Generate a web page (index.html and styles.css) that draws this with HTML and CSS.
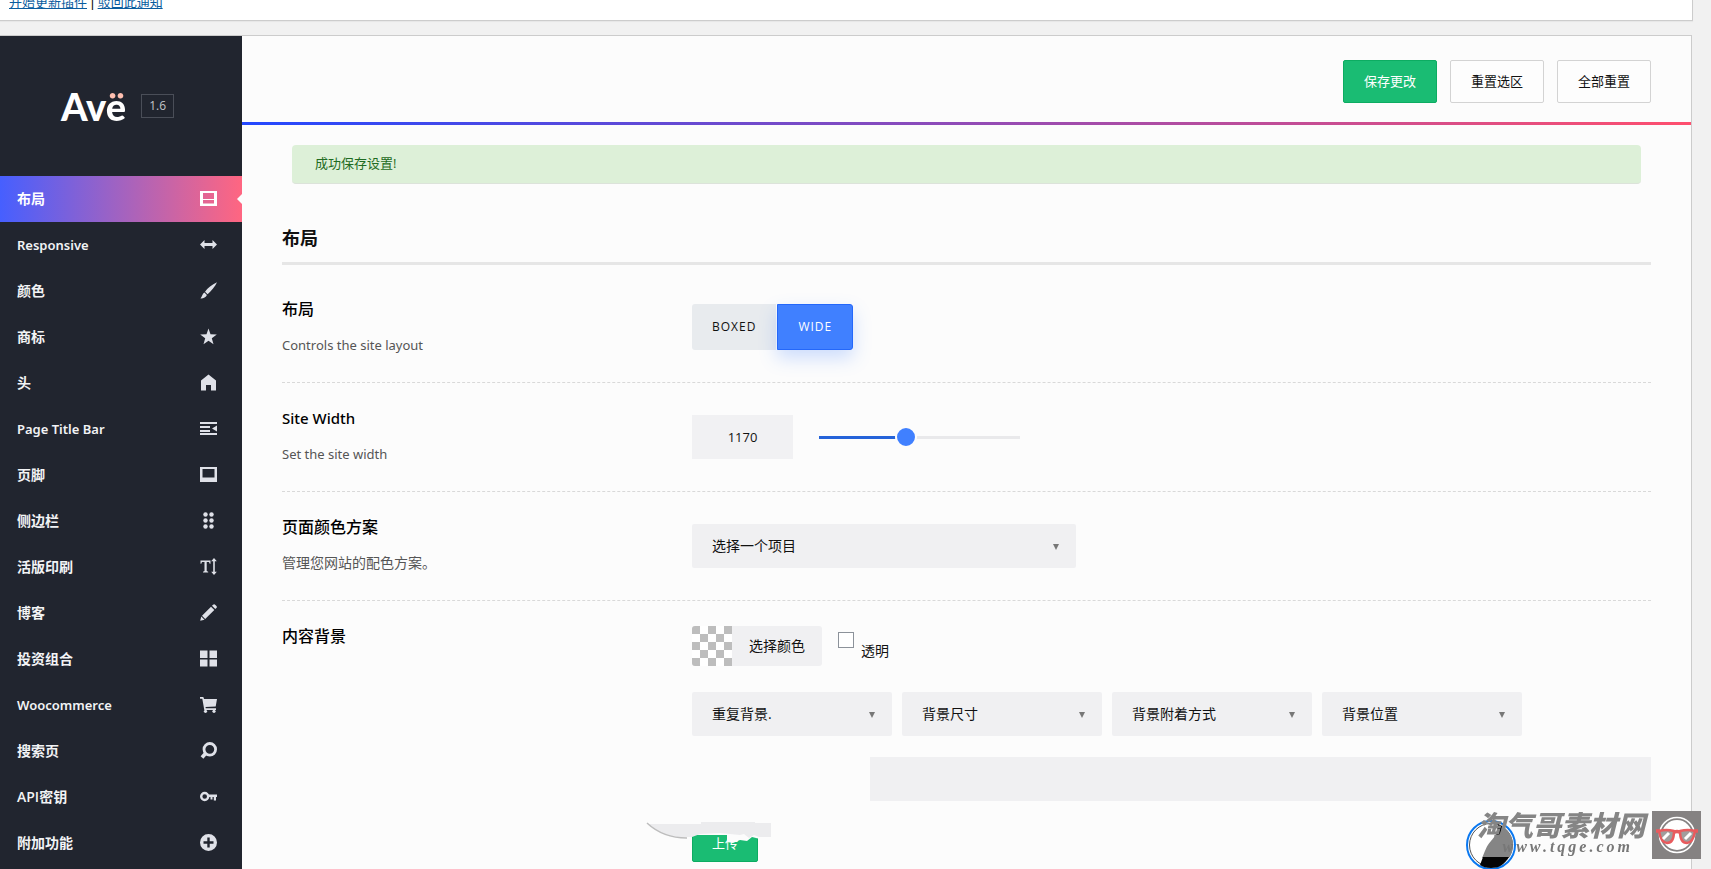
FILE: index.html
```html
<!DOCTYPE html>
<html lang="zh-CN">
<head>
<meta charset="utf-8">
<title>Avë 主题选项</title>
<link rel="stylesheet" href="styles.css">
</head>
<body>
<div class="notice"><a href="#">开始更新插件</a> | <a href="#">驳回此通知</a></div>
<div class="panel">
  <aside class="sidebar">
    <div class="brand">
      <span class="logo">Av<span class="logo-accent">ë</span></span>
      <span class="version">1.6</span>
    </div>
    <nav class="menu">
      <a class="item active" href="#"><span>布局</span><svg viewBox="0 0 17 17"><path fill-rule="evenodd" d="M0 1h17v15H0zM3 3v6h11V3zM3 10v3.500h11V10z"/></svg></a>
      <a class="item latin" href="#"><span>Responsive</span><svg viewBox="0 0 17 17"><path d="M0 8.500 4.500 4v3h8V4L17 8.500 12.500 13v-3h-8v3z"/></svg></a>
      <a class="item" href="#"><span>颜色</span><svg viewBox="0 0 17 17"><path d="M17 .3C12 2.500 7.500 6 5 9.800l2.600 2.500C11.500 9 15 4.500 17 .3zM4.400 10.600C2.500 11.500 2.300 14.500.5 16.500c2.500.2 5.500-.8 6.400-3.400z"/></svg></a>
      <a class="item" href="#"><span>商标</span><svg viewBox="0 0 17 17"><path d="m8.500 .5 2 5.700 6.300.2-5 3.800 1.700 6-5-3.400-5 3.400 1.700-6-5-3.800 6.300-.2z"/></svg></a>
      <a class="item" href="#"><span>头</span><svg viewBox="0 0 17 17"><path d="M8.500.5 16 6.500v10h-5V11H6v5.500H1v-10z"/></svg></a>
      <a class="item latin" href="#"><span>Page Title Bar</span><svg viewBox="0 0 17 17"><path d="M0 2h17v2H0zM0 6h10v2H0zM0 10h10v2H0zM0 13h17v2H0zM17 5.500v6L12 8.500z"/></svg></a>
      <a class="item" href="#"><span>页脚</span><svg viewBox="0 0 17 17"><path fill-rule="evenodd" d="M0 1h17v15H0zM2.500 3v8.500h12V3z"/></svg></a>
      <a class="item" href="#"><span>侧边栏</span><svg viewBox="0 0 17 17"><circle cx="5.500" cy="2.500" r="2.200"/><circle cx="11.500" cy="2.500" r="2.200"/><circle cx="5.500" cy="8.500" r="2.200"/><circle cx="11.500" cy="8.500" r="2.200"/><circle cx="5.500" cy="14.500" r="2.200"/><circle cx="11.500" cy="14.500" r="2.200"/></svg></a>
      <a class="item" href="#"><span>活版印刷</span><svg viewBox="0 0 17 17"><path d="M.5 2.500h10v3.200H9.700L9 4H6.700v9l1.500.7v.8H3v-.8l1.500-.7V4H2l-.7 1.700H.5zM14 0l2.800 3.200h-2v10.600h2L14 17l-2.800-3.200h2V3.200h-2z"/></svg></a>
      <a class="item" href="#"><span>博客</span><svg viewBox="0 0 17 17"><path d="M11 2.800 14.300 6 5.200 15 2 11.800zM12 1.800 13 .8q1.200-1 2.400.1l1 1q1 1.200 0 2.200L15.300 5zM1.300 12.600l3.200 3.100-4.300 1z"/></svg></a>
      <a class="item" href="#"><span>投资组合</span><svg viewBox="0 0 17 17"><path d="M0 .5h7.500V8H0zM9.500.5H17V8H9.500zM0 9.500h7.500v7H0zM9.500 9.500H17v7H9.500z"/></svg></a>
      <a class="item latin" href="#"><span>Woocommerce</span><svg viewBox="0 0 17 17"><path d="M0 1h3.300l.8 2H17l-1.300 7.500L5.500 11l.3 1.300H16V14H4.300L2.300 2.700H0z"/><circle cx="5.500" cy="15.300" r="1.600"/><circle cx="14" cy="15.300" r="1.600"/></svg></a>
      <a class="item" href="#"><span>搜索页</span><svg viewBox="0 0 17 17"><path class="line" d="M5.500 11.500 2 15.500" stroke-width="3.600"/><circle class="line" cx="9.800" cy="7.300" r="5.800" stroke-width="2.800"/></svg></a>
      <a class="item" href="#"><span>API密钥</span><svg viewBox="0 0 17 17"><circle class="line" cx="4.700" cy="8.500" r="3.500" stroke-width="2.400"/><path d="M8.300 6.500H17V9h-1v3.500h-2.200V9h-1.300v2.500h-2V9H8.300z"/></svg></a>
      <a class="item" href="#"><span>附加功能</span><svg viewBox="0 0 17 17"><path fill-rule="evenodd" d="M8.500 0a8.500 8.500 0 1 1 0 17 8.500 8.500 0 0 1 0-17zM7.300 3.500v3.800H3.500v2.400h3.800v3.800h2.400V9.700h3.800V7.300H9.700V3.500z"/></svg></a>
    </nav>
  </aside>
  <main class="main">
    <header class="topbar">
      <button class="btn primary" type="button">保存更改</button>
      <button class="btn" type="button">重置选区</button>
      <button class="btn" type="button">全部重置</button>
    </header>
    <div class="saved" role="status">成功保存设置!</div>
    <div class="content">
      <h2 class="section-title">布局</h2>
      <section class="row">
        <div class="info"><h3>布局</h3><p class="latin">Controls the site layout</p></div>
        <div class="control toggle">
          <button type="button">BOXED</button><button type="button" class="on" aria-pressed="true">WIDE</button>
        </div>
      </section>
      <section class="row">
        <div class="info"><h3 class="latin"><label for="width">Site Width</label></h3><p class="latin">Set the site width</p></div>
        <div class="control width-control">
          <input class="number" id="width" type="text" value="1170">
          <input class="slider" type="range" min="320" max="2320" value="1170" aria-label="Site Width">
        </div>
      </section>
      <section class="row">
        <div class="info"><h3><label for="scheme">页面颜色方案</label></h3><p>管理您网站的配色方案。</p></div>
        <div class="control">
          <div class="select wide"><select id="scheme"><option>选择一个项目</option></select></div>
        </div>
      </section>
      <section class="row backgrounds">
        <div class="info"><h3>内容背景</h3></div>
        <div class="control">
          <div class="color-line">
            <button class="picker" type="button"><span class="checker"></span><span class="picker-text">选择颜色</span></button>
            <input class="check" id="transparent" type="checkbox"><label class="check-label" for="transparent">透明</label>
          </div>
          <div class="selects">
            <div class="select"><select aria-label="重复背景"><option>重复背景.</option></select></div>
            <div class="select"><select aria-label="背景尺寸"><option>背景尺寸</option></select></div>
            <div class="select"><select aria-label="背景附着方式"><option>背景附着方式</option></select></div>
            <div class="select"><select aria-label="背景位置"><option>背景位置</option></select></div>
          </div>
          <div class="url-line"><input class="url" type="text" aria-label="背景图片"></div>
          <div class="upload-line">
            <button class="btn primary upload" type="button">上传</button>
            <svg class="smear" viewBox="0 0 130 28" aria-hidden="true">
              <path fill="#fcfcfc" d="M42 0h72v22l-8-2-5 4-7-1-7 3-6-1V18H42z"/>
              <path fill="#ececee" d="M3 7h52V5h54v1h16v14h-12l-5-2-5 3-5-4-4 1-20-2-20 1-8 3H34Q18 21 3 7z"/>
              <path fill="none" stroke="#bdbdbd" stroke-width="1.500" d="M1 6q16 15 40 15"/>
            </svg>
          </div>
        </div>
      </section>
    </div>
  </main>
</div>
<div class="badge">
  <svg class="emblem" viewBox="0 0 50 50" aria-hidden="true">
    <circle cx="25" cy="25" r="24" fill="#fff" stroke="#0a78f0" stroke-width="2"/>
    <circle cx="25" cy="25" r="21.500" fill="none" stroke="#555"/>
    <path fill="#858585" d="M33 5c7 2 13 9 14 18 0 6-1 11-4 15H16c3-6 4-12 9-17 4-4 6-9 8-16z"/>
    <path fill="#050505" d="m32 4 4 2-1 9-5 3zM17 37h26c-5 8-10 11-18 11-5 0-8-1-11-3z"/>
  </svg>
  <div class="mark"><div class="mark-name">淘气哥素材网</div><div class="mark-url">www.tqge.com</div></div>
  <svg class="face" viewBox="0 0 49 48" aria-hidden="true">
    <path fill="#858282" d="M0 0h49v48H0z"/>
    <circle cx="25" cy="24" r="17.500" fill="none" stroke="#fff" stroke-width="1.500"/>
    <circle cx="25" cy="24" r="15" fill="#fff"/>
    <path fill="#a09d9d" stroke="#e85b5e" stroke-width="2.500" stroke-linejoin="round" d="M7 20q7-2 15 0 0 12-7 12-6 0-8-12zM28 20q8-2 15 0-2 12-8 12-7 0-7-12z"/>
    <path fill="none" stroke="#e85b5e" stroke-width="3.500" d="M4 20h4M42 20h4M22 21q3-1 6 0"/>
    <path stroke="#fff" stroke-width="3" d="m11 28 6-6M33 28l6-6"/>
  </svg>
</div>
</body>
</html>
```
FILE: styles.css
```css
* { box-sizing: border-box; }

body {
  margin: 0;
  display: flex;
  flex-direction: column;
  gap: 14px;
  height: 100vh;
  overflow: hidden;
  background: #f1f1f1;
  color: #111;
  font: 14px/20px "Open Sans", "Noto Sans CJK SC", sans-serif;
}

button, input, select { font: inherit; color: inherit; }
h2, h3, p { margin: 0; }

.notice {
  flex: none;
  height: 21px;
  margin-right: 18px;
  padding-left: 9px;
  background: #fff;
  border: solid #ccc;
  border-width: 0 1px 1px 0;
  box-shadow: 0 1px 1px #0000000a;
  font: 13px/6px "Liberation Sans", "Noto Sans CJK SC", sans-serif;
}
.notice a { color: #0a5c9e; }

.panel {
  flex: 1 0 auto;
  display: flex;
  margin-right: 19px;
  border: solid #ccc;
  border-width: 1px 1px 0 0;
  background: #fcfcfc;
}

.sidebar {
  flex: none;
  width: 242px;
  background: #21252f;
}
.brand {
  display: flex;
  align-items: center;
  gap: 15px;
  height: 140px;
  padding-left: 61px;
}
.logo {
  color: #fff;
  font: 900 38px/44px Lato, sans-serif;
}
.logo-accent {
  background: linear-gradient(#ffbfb0 34%, #fff 34%);
  background-clip: text;
  color: transparent;
}
.version {
  width: 33px;
  height: 24px;
  border: 1px solid #4a4e58;
  color: #c3c5ca;
  font-size: 12px;
  line-height: 22px;
  text-align: center;
}

.item {
  display: flex;
  align-items: center;
  justify-content: space-between;
  height: 46px;
  padding: 0 25px 1px 17px;
  color: #f2f3f5;
  font-weight: 600;
  text-decoration: none;
}
.item svg { width: 17px; height: 17px; fill: #dfe1e8; }
.item .line { fill: none; stroke: #dfe1e8; }
.item.active {
  position: relative;
  background: linear-gradient(90deg, #465fff, #ff6681);
  color: #fff;
}
.item.active svg { fill: #fff; }
.item.active::after {
  content: "";
  position: absolute;
  right: 0;
  top: 18px;
  border: solid transparent;
  border-width: 5px 5px 5px 0;
  border-right-color: #fcfcfc;
}
.latin { font-family: "Noto Sans", sans-serif; font-size: 13px; }

.main { flex: 1; min-width: 0; }

.topbar {
  display: flex;
  justify-content: flex-end;
  gap: 13px;
  padding: 24px 40px 19px;
  border-bottom: 3px solid;
  border-image: linear-gradient(90deg, #2348ff, #ff4f6e) 1;
}
.btn {
  height: 43px;
  min-width: 94px;
  padding: 0 20px 2px;
  border: 1px solid #d3d3d3;
  border-radius: 2px;
  background: #fdfdfd;
  font-size: 13px;
}
.btn.primary { background: #1abc73; border-color: #0dac62; color: #fff; }

.saved {
  margin: 20px 50px 0;
  padding: 8px 23px 10px;
  border-bottom: 1px solid #dce3da;
  border-radius: 4px;
  background: #ddf0d8;
  color: #1f6b22;
  font-size: 13px;
}

.content { padding: 0 40px; }
.section-title {
  margin: 36px 0 9px;
  padding: 6px 0 12px;
  border-bottom: 3px solid #e6e6e6;
  font-size: 18px;
  line-height: 24px;
}

.row {
  display: grid;
  grid-template-columns: 410px minmax(0, 1fr);
  min-height: 109px;
  border-bottom: 1px dashed #d9d9d9;
}
.info { padding-top: 23px; }
.info h3 { font-size: 16px; line-height: 24px; font-weight: 500; color: #000; }
.info h3.latin { font-size: 15px; }
.info p { margin-top: 14px; color: #555; }
.control { padding-top: 32px; }
.backgrounds { border-bottom: 0; }
.backgrounds .control { padding-top: 25px; }

.control.toggle { display: flex; align-items: flex-start; gap: 1px; padding-top: 30px; }
.toggle button {
  height: 46px;
  padding: 0 20px;
  border: 0;
  border-radius: 3px 0 0 3px;
  background: #e8ebee;
  font-size: 12px;
  letter-spacing: 1px;
}
.toggle .on {
  border: 1px solid #2468fa;
  border-radius: 0 3px 3px 0;
  background: #4080ff;
  color: #fff;
  box-shadow: 0 8px 18px #4080ff40;
}

.width-control { display: flex; align-items: flex-start; gap: 26px; }
.number {
  width: 101px;
  height: 44px;
  border: 0;
  background: #f1f1f3;
  font-size: 13px;
  text-align: center;
}
.slider {
  appearance: none;
  width: 201px;
  height: 44px;
  margin: 0;
  background: linear-gradient(90deg, #2563d9 43%, #e9e9eb 43%) center / 100% 3px no-repeat;
}
.slider::-webkit-slider-thumb {
  appearance: none;
  width: 22px;
  height: 22px;
  border: 2px solid #fcfcfc;
  border-radius: 50%;
  background: #4080ff;
}

.select { position: relative; flex: 0 1 200px; }
.select.wide { max-width: 384px; }
.select select {
  appearance: none;
  display: block;
  width: 100%;
  height: 44px;
  padding: 0 32px 0 20px;
  border: 0;
  border-radius: 2px;
  background: #f0f0f2;
}
.select::after {
  content: "";
  position: absolute;
  right: 17px;
  top: 20px;
  border: solid transparent;
  border-width: 6px 3px 0;
  border-top-color: #777;
}

.color-line { display: flex; align-items: flex-start; }
.picker {
  display: flex;
  align-items: center;
  height: 40px;
  padding: 0;
  overflow: hidden;
  border: 0;
  border-radius: 3px;
  background: #f0f0f2;
}
.checker {
  width: 40px;
  height: 40px;
  background: repeating-conic-gradient(#bdbdbd 0 25%, #fff 0 50%) 8px 0 / 16px 16px;
}
.picker-text { padding: 0 17px; }
.check {
  appearance: none;
  width: 16px;
  height: 16px;
  margin: 6px 7px 0 16px;
  border: 1px solid #8c929a;
  background: #fff;
}
.check-label { padding-top: 15px; }

.selects { display: flex; gap: 10px; margin-top: 26px; }
.url-line { display: flex; margin-top: 21px; padding-left: 178px; }
.url {
  flex: 1;
  height: 44px;
  padding: 0 20px;
  border: 0;
  background: #f0f0f2;
}
.upload-line { position: relative; display: flex; margin-top: 18px; }
.btn.upload { min-width: 66px; padding: 4px 18px 0; }
.smear { position: absolute; left: -46px; top: -2px; width: 130px; height: 28px; }

/* Site mark pinned over the lower right corner */
.badge {
  position: fixed;
  right: 10px;
  bottom: 0;
  display: flex;
  align-items: flex-start;
  height: 58px;
  padding-left: 11px;
  overflow: hidden;
}
.emblem {
  position: absolute;
  left: 0;
  top: 9px;
  width: 50px;
  height: 50px;
}
.mark {
  position: relative;
  width: 175px;
  color: #858585;
  font-style: italic;
  font-weight: 900;
  text-align: right;
}
.mark-name { padding-right: 10px; font-size: 28px; line-height: 28px; white-space: nowrap; }
.mark-url {
  padding-right: 19px;
  color: #777;
  font: italic 700 16px/16px "Liberation Serif", serif;
  letter-spacing: 3px;
}
.face { width: 49px; height: 48px; }
```
